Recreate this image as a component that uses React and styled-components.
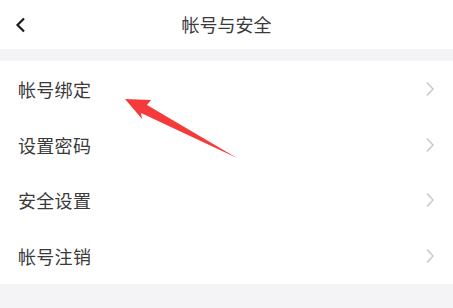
import React from "react";
import styled, { createGlobalStyle } from "styled-components";

const GlobalStyle = createGlobalStyle`
  html, body {
    margin: 0;
    padding: 0;
    background: #ffffff;
  }
  body {
    font-family: "Noto Sans CJK SC", "Noto Sans", sans-serif;
  }
`;

const Page = styled.div`
  width: 453px;
  height: 308px;
  position: relative;
  overflow: hidden;
  background: #f4f4f6;
  display: flex;
  flex-direction: column;
`;

const Header = styled.div`
  height: 49px;
  background: #ffffff;
  display: grid;
  grid-template-columns: 60px 1fr 60px;
  align-items: center;
`;

const Back = styled.div`
  padding-left: 15px;
  display: flex;
  align-items: center;
`;

const Title = styled.div`
  text-align: center;
  font-size: 18px;
  color: #3a3a3a;
  padding-bottom: 1px;
`;

const Gap = styled.div`
  height: 12px;
`;

const List = styled.div`
  background: #ffffff;
  display: flex;
  flex-direction: column;
`;

const Row = styled.div`
  height: 55.75px;
  display: flex;
  align-items: center;
  justify-content: space-between;
  padding: 0 18px;
`;

const Label = styled.span`
  font-size: 18px;
  color: #3a3a3a;
  letter-spacing: 0.3px;
`;

const Annotation = styled.svg`
  position: absolute;
  left: 0;
  top: 0;
  pointer-events: none;
`;

const Chevron = ({ color = "#c6c6c6" }) => (
  <svg width="10" height="16" viewBox="0 0 10 16">
    <path d="M2 1.5 L8 8 L2 14.5" fill="none" stroke={color} strokeWidth="1.4" />
  </svg>
);

const items = ["帐号绑定", "设置密码", "安全设置", "帐号注销"];

export default function App() {
  return (
    <Page>
      <GlobalStyle />
      <Header>
        <Back>
          <svg width="12" height="16" viewBox="0 0 12 16">
            <path d="M9 1.5 L2.5 8 L9 14.5" fill="none" stroke="#1a1a1a" strokeWidth="2.2" />
          </svg>
        </Back>
        <Title>帐号与安全</Title>
        <div />
      </Header>
      <Gap />
      <List>
        {items.map((t) => (
          <Row key={t}>
            <Label>{t}</Label>
            <Chevron />
          </Row>
        ))}
      </List>
      <Annotation width="453" height="308" viewBox="0 0 453 308">
        <polygon
          points="125,99 151,100 147,105 237,158 141,113 142,119"
          fill="#f43a3a"
        />
      </Annotation>
    </Page>
  );
}
